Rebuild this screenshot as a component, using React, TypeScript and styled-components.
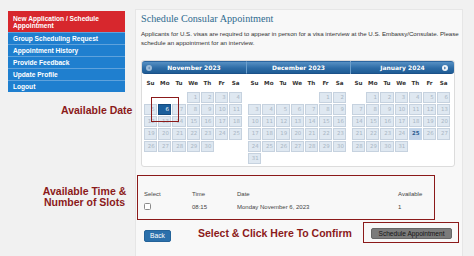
import React from "react";
import styled, { createGlobalStyle, css } from "styled-components";

const GlobalStyle = createGlobalStyle`
  html, body {
    margin: 0;
    padding: 0;
    background: #f1f1f1;
    font-family: "Liberation Sans", Arial, sans-serif;
  }
  #root {
    width: 474px;
    height: 256px;
    overflow: hidden;
  }
  * { box-sizing: border-box; }
`;

const Page = styled.div`
  position: relative;
  display: flex;
  align-items: flex-start;
  gap: 10px;
  padding: 9px 0 0 8px;
  width: 474px;
  height: 256px;
  overflow: hidden;
`;

const Sidebar = styled.nav`
  width: 117px;
  margin-top: 2px;
  display: flex;
  flex-direction: column;
`;

const MenuItem = styled.div<{ $active?: boolean }>`
  color: #fff;
  font-weight: bold;
  font-size: 6.6px;
  line-height: 7px;
  padding: 0 5px;
  ${(p) =>
    p.$active
      ? css`
          background: #d7272d;
          padding-top: 3.5px;
          padding-bottom: 3.5px;
        `
      : css`
          background: #1f7fcf;
          height: 12px;
          display: flex;
          align-items: center;
          border-top: 1px solid #5fa2dc;
        `}
`;

const Panel = styled.main`
  width: 328px;
  min-height: 247px;
  background: #f8f8f8;
  border: 1px solid #e6e6e6;
  border-bottom: none;
  padding: 3px 2px 0 5px;
  display: flex;
  flex-direction: column;
`;

const Title = styled.h1`
  margin: 0;
  font-family: "Liberation Serif", Georgia, serif;
  font-weight: normal;
  font-size: 10.2px;
  line-height: 12px;
  color: #2f6b8f;
`;

const Intro = styled.p`
  margin: 3.5px -10px 0 0;
  font-size: 6.15px;
  line-height: 9.2px;
  color: #333;
`;

const Datepicker = styled.div`
  margin-top: 13px;
  width: 314px;
  background: #fff;
  border: 1px solid #dcdcdc;
  border-radius: 3px;
  display: flex;
  padding-bottom: 1.5px;
  font-family: "DejaVu Sans", Verdana, sans-serif;
`;

const MonthGroup = styled.div`
  width: 104px;
  display: flex;
  flex-direction: column;
`;

const MonthHeader = styled.div<{ $pos: "first" | "middle" | "last" }>`
  position: relative;
  height: 13px;
  background: linear-gradient(#5690c4, #2d6ca6 55%, #1f5c95);
  border-top: 1px solid #2a65a0;
  border-bottom: 1px solid #1b5189;
  color: #fff;
  font-weight: bold;
  font-size: 6px;
  display: flex;
  align-items: center;
  justify-content: center;
  ${(p) => p.$pos === "first" && css`border-radius: 3px 0 0 3px;`}
  ${(p) => p.$pos === "last" && css`border-radius: 0 3px 3px 0;`}
  ${(p) => p.$pos !== "first" && css`border-left: 1px solid #6c9fcc;`}
`;

const NavIcon = styled.svg<{ $side: "prev" | "next" }>`
  position: absolute;
  top: 3.5px;
  width: 6px;
  height: 6px;
  ${(p) => (p.$side === "prev" ? css`left: 4px;` : css`right: 6px;`)}
`;

const DayNames = styled.div`
  display: grid;
  grid-template-columns: repeat(7, 13.2px);
  column-gap: 1px;
  margin-left: 2px;
  height: 18px;
  align-items: center;
  font-size: 5.6px;
  font-weight: bold;
  color: #333;
  text-align: center;
`;

const DaysGrid = styled.div`
  display: grid;
  grid-template-columns: repeat(7, 13.2px);
  grid-auto-rows: 11.2px;
  gap: 1px;
  margin-left: 2px;
`;

const DayCell = styled.div<{ $state?: "normal" | "selected" | "highlight" | "empty" }>`
  font-size: 5.4px;
  line-height: 9.2px;
  text-align: right;
  padding-right: 1.5px;
  ${(p) => {
    switch (p.$state) {
      case "empty":
        return css`background: transparent;`;
      case "selected":
        return css`
          background: #1b5f9c;
          border: 1px solid #154c80;
          color: #fff;
        `;
      case "highlight":
        return css`
          background: #c3d5e9;
          border: 1px solid #c3d5e9;
          color: #2b5c91;
          font-weight: bold;
        `;
      default:
        return css`
          background: #dfe8f1;
          border: 1px solid #c6d2df;
          color: #a9b6c4;
        `;
    }
  }}
`;

const SlotsTable = styled.div`
  margin-top: 20.5px;
  padding-left: 3px;
  display: grid;
  grid-template-columns: 48px 45px 161px auto;
  grid-auto-rows: 13px;
  align-items: center;
  font-size: 6px;
  color: #444;
`;

const Checkbox = styled.span`
  display: block;
  width: 7px;
  height: 7px;
  background: #fff;
  border: 1px solid #8a8a8a;
  border-radius: 1.5px;
`;

const Actions = styled.div`
  margin-top: 14.5px;
  padding: 0 8px 0 3px;
  display: flex;
  justify-content: space-between;
  align-items: flex-start;
`;

const BackButton = styled.button`
  margin-top: 2px;
  width: 27px;
  height: 12px;
  padding: 0;
  border: 1px solid #246399;
  border-radius: 2px;
  background: #2b70ab;
  color: #fff;
  font-family: "Liberation Sans", Arial, sans-serif;
  font-size: 6.7px;
`;

const ScheduleButton = styled.button`
  width: 81px;
  height: 11px;
  padding: 0;
  border: 1px solid #666;
  border-radius: 2px;
  background: #7b7b7b;
  color: #141414;
  font-family: "Liberation Sans", Arial, sans-serif;
  font-size: 6.6px;
`;

const calloutBox = css`
  position: absolute;
  border: 1.5px solid #8b1a1a;
  pointer-events: none;
`;

const DateCallout = styled.div`
  ${calloutBox};
  left: 151px;
  top: 97px;
  width: 28px;
  height: 25px;
`;

const SlotsCallout = styled.div`
  ${calloutBox};
  left: 137px;
  top: 175px;
  width: 298px;
  height: 45px;
`;

const ConfirmCallout = styled.div`
  ${calloutBox};
  left: 363px;
  top: 222px;
  width: 96px;
  height: 21px;
`;

const calloutText = css`
  position: absolute;
  margin: 0;
  font-family: "Liberation Sans", Arial, sans-serif;
  font-weight: bold;
  font-size: 10.5px;
  color: #8b1a1a;
  white-space: nowrap;
`;

const DateLabel = styled.p`
  ${calloutText};
  left: 61px;
  top: 104px;
  line-height: 12px;
`;

const SlotsLabel = styled.p`
  ${calloutText};
  left: 38px;
  top: 185.5px;
  width: 93px;
  line-height: 11px;
  text-align: center;
`;

const ConfirmLabel = styled.p`
  ${calloutText};
  left: 198px;
  top: 227px;
  line-height: 12px;
`;

type Month = { name: string; year: number; month: number };

const months: Month[] = [
  { name: "November", year: 2023, month: 10 },
  { name: "December", year: 2023, month: 11 },
  { name: "January", year: 2024, month: 0 },
];

const dayNames = ["Su", "Mo", "Tu", "We", "Th", "Fr", "Sa"];

function buildDays(year: number, month: number): (number | null)[] {
  const first = new Date(year, month, 1).getDay();
  const count = new Date(year, month + 1, 0).getDate();
  const out: (number | null)[] = [];
  for (let i = 0; i < first; i++) out.push(null);
  for (let d = 1; d <= count; d++) out.push(d);
  return out;
}

function cellState(m: Month, d: number | null) {
  if (d === null) return "empty" as const;
  if (m.month === 10 && d === 6) return "selected" as const;
  if (m.month === 0 && d === 25) return "highlight" as const;
  return "normal" as const;
}

const Arrow = ({ side }: { side: "prev" | "next" }) => (
  <NavIcon $side={side} viewBox="0 0 12 12">
    <circle cx="6" cy="6" r="6" fill={side === "prev" ? "#9dbbd8" : "#eef3f8"} />
    {side === "prev" ? (
      <path d="M7.5 3.2 L4 6 L7.5 8.8 Z" fill="#5a88b4" />
    ) : (
      <path d="M4.5 3.2 L8 6 L4.5 8.8 Z" fill="#2a68a2" />
    )}
  </NavIcon>
);

export default function App() {
  return (
    <>
      <GlobalStyle />
      <Page>
        <Sidebar>
          <MenuItem $active>New Application / Schedule Appointment</MenuItem>
          <MenuItem>Group Scheduling Request</MenuItem>
          <MenuItem>Appointment History</MenuItem>
          <MenuItem>Provide Feedback</MenuItem>
          <MenuItem>Update Profile</MenuItem>
          <MenuItem>Logout</MenuItem>
        </Sidebar>

        <Panel>
          <Title>Schedule Consular Appointment</Title>
          <Intro>
            Applicants for U.S. visas are required to appear in person for a visa interview at the
            U.S. Embassy/Consulate. Please schedule an appointment for an interview.
          </Intro>

          <Datepicker>
            {months.map((m, i) => (
              <MonthGroup key={m.name}>
                <MonthHeader $pos={i === 0 ? "first" : i === 2 ? "last" : "middle"}>
                  {i === 0 && <Arrow side="prev" />}
                  {m.name} {m.year}
                  {i === 2 && <Arrow side="next" />}
                </MonthHeader>
                <DayNames>
                  {dayNames.map((n) => (
                    <span key={n}>{n}</span>
                  ))}
                </DayNames>
                <DaysGrid>
                  {buildDays(m.year, m.month).map((d, idx) => (
                    <DayCell key={idx} $state={cellState(m, d)}>
                      {d ?? ""}
                    </DayCell>
                  ))}
                </DaysGrid>
              </MonthGroup>
            ))}
          </Datepicker>

          <SlotsTable>
            <span>Select</span>
            <span>Time</span>
            <span>Date</span>
            <span>Available</span>
            <span>
              <Checkbox />
            </span>
            <span>08:15</span>
            <span>Monday November 6, 2023</span>
            <span>1</span>
          </SlotsTable>

          <Actions>
            <BackButton>Back</BackButton>
            <ScheduleButton>Schedule Appointment</ScheduleButton>
          </Actions>
        </Panel>

        <DateCallout />
        <SlotsCallout />
        <ConfirmCallout />
        <DateLabel>Available Date</DateLabel>
        <SlotsLabel>
          Available Time &amp;
          <br />
          Number of Slots
        </SlotsLabel>
        <ConfirmLabel>Select &amp; Click Here To Confirm</ConfirmLabel>
      </Page>
    </>
  );
}
